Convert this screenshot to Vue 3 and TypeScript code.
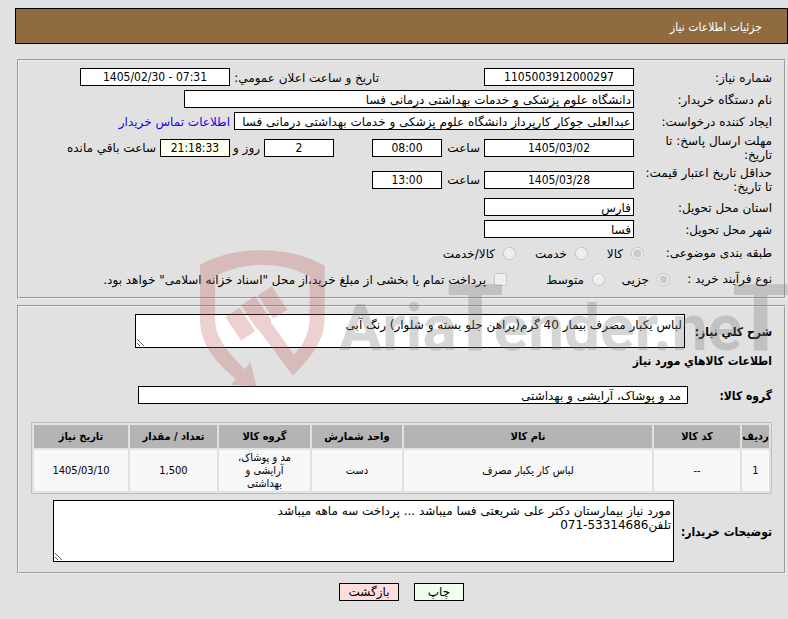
<script setup lang="ts">
interface Column {
  key: string
  title: string
}

const columns: Column[] = [
  { key: 'row', title: 'ردیف' },
  { key: 'code', title: 'کد کالا' },
  { key: 'name', title: 'نام کالا' },
  { key: 'unit', title: 'واحد شمارش' },
  { key: 'group', title: 'گروه کالا' },
  { key: 'count', title: 'تعداد / مقدار' },
  { key: 'date', title: 'تاریخ نیاز' },
]

const items: Record<string, string>[] = [
  {
    row: '1',
    code: '--',
    name: 'لباس کار یکبار مصرف',
    unit: 'دست',
    group: 'مد و پوشاک، آرایشی و بهداشتی',
    count: '1,500',
    date: '1405/03/10',
  },
]

const summary = 'لباس یکبار مصرف بیمار 40 گرم(پراهن جلو بسته و شلوار) رنگ آبی'
const notes =
  'مورد نیاز بیمارستان دکتر علی شریعتی فسا میباشد ... پرداخت سه ماهه میباشد\nتلفن53314686-071'
</script>

<template>
  <div class="page" dir="rtl" lang="fa">
    <header class="title-bar"><h1>جزئیات اطلاعات نیاز</h1></header>

    <main class="content">
      <section class="panel">
        <div class="row">
          <label class="caption" for="need-no">شماره نیاز:</label>
          <input id="need-no" class="box w150 center" value="1105003912000297" readonly />
          <label class="announce" for="announced">تاریخ و ساعت اعلان عمومي:</label>
          <input id="announced" class="box w150 center" dir="ltr" value="1405/02/30 - 07:31" readonly />
        </div>
        <div class="row">
          <label class="caption" for="buyer">نام دستگاه خریدار:</label>
          <input id="buyer" class="box w450" value="دانشگاه علوم پزشکی و خدمات بهداشتی درمانی فسا" readonly />
        </div>
        <div class="row">
          <label class="caption" for="creator">ایجاد کننده درخواست:</label>
          <input id="creator" class="box w400" value="عبدالعلی جوکار کارپرداز دانشگاه علوم پزشکی و خدمات بهداشتی درمانی فسا" readonly />
          <a class="contact" href="#contact">اطلاعات تماس خریدار</a>
        </div>
        <div class="row tall">
          <label class="caption" for="reply-date">مهلت ارسال پاسخ: تا<br />تاریخ:</label>
          <input id="reply-date" class="box w150 center" value="1405/03/02" readonly />
          <label class="hour" for="reply-hour">ساعت</label>
          <input id="reply-hour" class="box w70 center" value="08:00" readonly />
          <input class="box w70 center days" aria-label="روز" value="2" readonly />
          <label class="day-unit" for="left">روز و</label>
          <input id="left" class="box w70 center timer" value="21:18:33" readonly />
          <span class="remaining">ساعت باقي مانده</span>
        </div>
        <div class="row tall">
          <label class="caption" for="price-date">حداقل تاریخ اعتبار قیمت:<br />تا تاریخ:</label>
          <input id="price-date" class="box w150 center" value="1405/03/28" readonly />
          <label class="hour" for="price-hour">ساعت</label>
          <input id="price-hour" class="box w70 center" value="13:00" readonly />
        </div>
        <div class="row">
          <label class="caption" for="province">استان محل تحویل:</label>
          <input id="province" class="box w150" value="فارس" readonly />
        </div>
        <div class="row">
          <label class="caption" for="city">شهر محل تحویل:</label>
          <input id="city" class="box w150" value="فسا" readonly />
        </div>
        <div class="row options" role="radiogroup" aria-label="طبقه بندی موضوعی">
          <span class="kind-caption">طبقه بندی موضوعی:</span>
          <label class="choice c1"><input type="radio" name="kind" checked disabled /><span>کالا</span></label>
          <label class="choice c2"><input type="radio" name="kind" disabled /><span>خدمت</span></label>
          <label class="choice"><input type="radio" name="kind" disabled /><span>کالا/خدمت</span></label>
        </div>
        <div class="row options" role="radiogroup" aria-label="نوع فرآیند خرید">
          <span class="process-caption">نوع فرآیند خرید :</span>
          <label class="choice c3"><input type="radio" name="process" checked disabled /><span>جزیی</span></label>
          <label class="choice c4"><input type="radio" name="process" disabled /><span>متوسط</span></label>
          <label class="choice"><input type="checkbox" disabled /><span>پرداخت تمام یا بخشی از مبلغ خرید،از محل "اسناد خزانه اسلامی" خواهد بود.</span></label>
        </div>
      </section>

      <section class="panel">
        <div class="row summary">
          <label class="strong" for="summary">شرح کلي نیاز:</label>
          <textarea id="summary" :value="summary" readonly></textarea>
        </div>
        <h2>اطلاعات کالاهاي مورد نیاز</h2>
        <div class="row group">
          <label class="strong" for="group">گروه کالا:</label>
          <input id="group" class="box" value="مد و پوشاک، آرایشی و بهداشتی" readonly />
        </div>
        <table>
          <colgroup>
            <col v-for="c in columns" :key="c.key" :class="'col-' + c.key" />
          </colgroup>
          <thead>
            <tr><th v-for="c in columns" :key="c.key">{{ c.title }}</th></tr>
          </thead>
          <tbody>
            <tr v-for="item in items" :key="item.row">
              <td v-for="c in columns" :key="c.key">{{ item[c.key] }}</td>
            </tr>
          </tbody>
        </table>
        <div class="row notes">
          <label class="strong" for="notes">توضیحات خریدار:</label>
          <textarea id="notes" :value="notes" readonly></textarea>
        </div>
      </section>

      <div class="actions">
        <button type="button" class="print">چاپ</button>
        <button type="button" class="back">بازگشت</button>
      </div>
    </main>

    <div class="watermark" dir="ltr">
      <svg viewBox="30 30 374 409" aria-hidden="true">
        <path
          d="M30 74Q110 30 215 30Q320 30 403 76V232C403 300 366 345 308 406L205 268L201 267L153 195L195 167L243 240L242 246L311 343C342 310 358 275 358 232V108Q290 74 215 74Q140 74 75 108V232C75 290 108 330 164 386L181 365L199 438L122 433L137 416C70 357 30 310 30 232Z"
        />
        <path d="M245 138L291 208L249 235L203 165ZM148 202L195 272L153 300L106 230Z" />
      </svg>
      <span class="brand">Aria<span class="cap">T</span>ender.ne<span class="cap">T</span></span>
    </div>
  </div>
</template>

<style>
body {
  background: #e1e1e1;
}
</style>

<style scoped>
.page {
  position: relative;
  padding: 8px 0 17px 15px;
  overflow: hidden;
  color: #000;
  font: 12px/14px 'DejaVu Sans', sans-serif;
}
.page * {
  box-sizing: border-box;
}
input,
textarea,
button {
  margin: 0;
  font: inherit;
  color: inherit;
}
.title-bar {
  display: flex;
  align-items: center;
  height: 36px;
  padding: 2px 25px 0;
  border: 1px solid #000;
  background: #8f6b3f;
  color: #fff;
}
h1,
h2,
table,
.center,
.strong {
  font-family: 'DejaVu Sans Condensed', 'DejaVu Sans', sans-serif;
}
h1 {
  margin: 0;
  font-size: 12px;
  font-weight: normal;
}
.content {
  padding: 15px 2px 0;
}
.panel {
  display: flex;
  flex-direction: column;
  gap: 4px;
  margin-bottom: 6px;
  padding: 7px 12px;
  border: 2px groove #eee;
}
.row {
  display: flex;
  align-items: center;
  min-height: 18px;
}
.row.tall {
  min-height: 28px;
}
.row.options {
  min-height: 22px;
}
.row > label,
.row > span,
.row > .box {
  flex: none;
}
.row:not(.tall) > label:not(.choice),
.contact,
.choice span {
  padding-top: 2px;
}
.caption {
  width: 138px;
  white-space: nowrap;
}
.box {
  height: 18px;
  padding: 1px 2px 0;
  border: 1px solid #000;
  border-radius: 0;
  background: #fff;
}
.box.center {
  padding: 0 2px;
  text-align: center;
}
.w70 {
  width: 70px;
}
.w150 {
  width: 150px;
}
.w400 {
  width: 400px;
}
.w450 {
  width: 450px;
}
.announce {
  width: 254px;
  padding-right: 105px;
  white-space: nowrap;
}
.contact {
  margin-right: 4px;
  color: #2200ee;
  text-decoration: none;
}
.hour {
  width: 42px;
  padding-right: 4px;
}
.days {
  margin-right: 38px;
}
.day-unit {
  width: 34px;
  padding-right: 4px;
  white-space: nowrap;
}
.timer {
  background: #ffffee;
}
.remaining {
  margin-right: 4px;
}
.kind-caption {
  width: 128px;
}
.process-caption {
  width: 102px;
}
.choice {
  display: flex;
  align-items: center;
  gap: 8px;
  white-space: nowrap;
}
.choice input {
  flex: none;
  width: 13px;
  height: 13px;
}
.c1 {
  width: 56px;
}
.c2 {
  width: 72px;
}
.c3 {
  width: 65px;
}
.c4 {
  width: 98px;
}
.strong,
h2 {
  margin: 0;
  font-size: 12px;
  font-weight: bold;
}
textarea {
  flex: 1;
  min-width: 0;
  padding: 3px 2px 0;
  border: 1px solid #000;
  border-radius: 0;
  background: #fff;
}
.summary .strong {
  width: 87px;
}
.summary textarea {
  height: 34px;
  margin-left: 104px;
}
h2 {
  margin-top: 2px;
}
.group {
  margin-top: 14px;
}
.group .strong {
  width: 84px;
}
.row.group > .box {
  flex: 1;
  margin-left: 107px;
  padding: 1px 6px 0;
}
table {
  width: 100%;
  margin: 14px 0 2px;
  table-layout: fixed;
  border: 1px solid #c0c0c0;
  border-collapse: separate;
  border-spacing: 2px;
  font-size: 11px;
  line-height: 13px;
  text-align: center;
}
th {
  height: 23px;
  padding: 0;
  background: #b4b4b4;
}
td {
  height: 41px;
  padding: 1px 12px;
  background: #f7f7f7;
}
td:first-child {
  padding: 0;
}
.col-row {
  width: 27px;
}
.col-code {
  width: 86px;
}
.col-unit {
  width: 90px;
}
.col-group {
  width: 91px;
}
.col-count {
  width: 87px;
}
.col-date {
  width: 94px;
}
.notes .strong {
  width: 98px;
}
.notes textarea {
  height: 62px;
  margin-left: 22px;
}
.notes {
  margin-bottom: 3px;
}
.actions {
  display: flex;
  justify-content: center;
  gap: 15px;
  padding-top: 3px;
}
button {
  height: 18px;
  padding: 0;
  border: 1px solid #000;
}
.print {
  width: 50px;
  background: #eeffee;
}
.back {
  width: 60px;
  background: #ffdddd;
}
.watermark {
  position: absolute;
  top: 250px;
  left: 200px;
  display: flex;
  gap: 14px;
  pointer-events: none;
}
.watermark svg {
  flex: none;
  width: 125px;
  height: 137px;
  fill: rgba(190, 80, 80, 0.27);
}
.brand {
  padding-top: 24px;
  color: rgba(128, 128, 128, 0.32);
  font: bold 64px/90px Roboto, 'Liberation Sans', sans-serif;
  white-space: nowrap;
}
.cap {
  margin: 0 -10px;
  font-size: 92px;
}
</style>
